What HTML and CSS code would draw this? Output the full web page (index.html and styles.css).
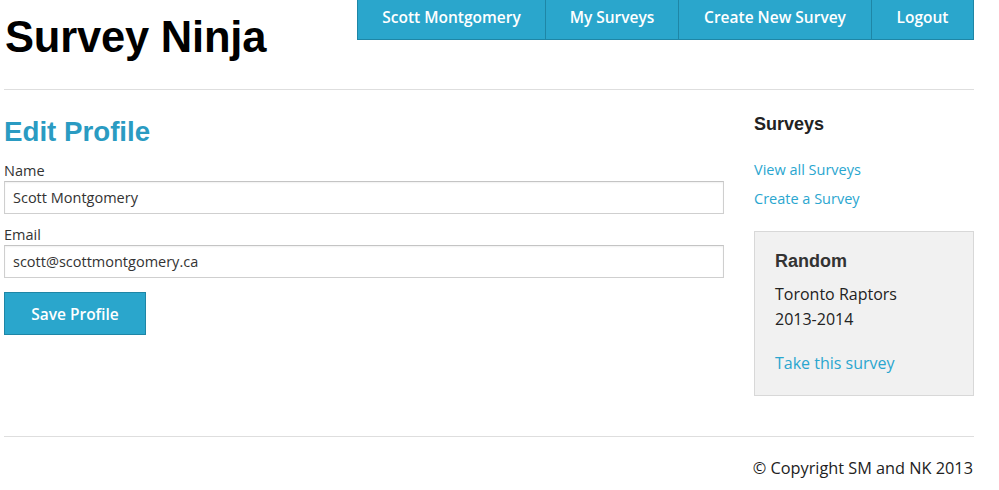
FILE: index.html
```html
<!DOCTYPE html>
<html>
<head>
<meta charset="utf-8">
<title>Survey Ninja</title>
<link rel="stylesheet" href="styles.css">
</head>
<body>
<div class="page">
  <header class="header">
    <h1 class="logo">Survey Ninja</h1>
    <nav class="nav">
      <a class="nav-item nav-user" href="#">Scott Montgomery</a>
      <a class="nav-item nav-my" href="#">My Surveys</a>
      <a class="nav-item nav-create" href="#">Create New Survey</a>
      <a class="nav-item nav-logout" href="#">Logout</a>
    </nav>
  </header>
  <hr class="rule">
  <div class="content">
    <main class="main">
      <h2 class="page-title">Edit Profile</h2>
      <form class="form">
        <label class="label" for="name">Name</label>
        <input class="input" id="name" type="text" value="Scott Montgomery">
        <label class="label label-email" for="email">Email</label>
        <input class="input" id="email" type="text" value="scott@scottmontgomery.ca">
        <button class="btn" type="button">Save Profile</button>
      </form>
    </main>
    <aside class="sidebar">
      <h3 class="side-title">Surveys</h3>
      <ul class="side-links">
        <li><a href="#">View all Surveys</a></li>
        <li><a href="#">Create a Survey</a></li>
      </ul>
      <div class="random">
        <h3 class="random-title">Random</h3>
        <p class="random-name">Toronto Raptors<br>2013-2014</p>
        <a class="random-link" href="#">Take this survey</a>
      </div>
    </aside>
  </div>
  <hr class="rule rule-footer">
  <footer class="footer">© Copyright SM and NK 2013</footer>
</div>
</body>
</html>
```

FILE: styles.css
```css
* { box-sizing: border-box; }
html, body { margin: 0; padding: 0; background: #fff; }
body {
  font-family: "Open Sans", "Noto Sans", sans-serif;
  color: #333;
  font-size: 15px;
}
a { text-decoration: none; color: #2aa6cf; }

.page {
  width: 970px;
  margin-left: 4px;
}

.header {
  display: flex;
  justify-content: space-between;
  align-items: flex-start;
  height: 89px;
}
.logo {
  margin: 11px 0 0 1px;
  font-family: "Liberation Sans", Arial, sans-serif;
  font-weight: bold;
  font-size: 43.5px;
  line-height: 52px;
  color: #000;
  letter-spacing: -0.2px;
}
.nav {
  display: flex;
  height: 40px;
  background: #2aa6cc;
  border: 1px solid #1e86a6;
  border-top: none;
}
.nav-item {
  display: flex;
  align-items: flex-start;
  justify-content: center;
  padding-top: 6px;
  color: #fff;
  font-size: 15.5px;
  font-weight: 600;
  line-height: 22px;
  height: 39px;
  border-left: 1px solid #1e86a6;
}
.nav-item:first-child { border-left: none; }
.nav-user { width: 187px; }
.nav-my { width: 133px; }
.nav-create { width: 193px; }
.nav-logout { width: 102px; }

.rule {
  border: none;
  border-top: 1px solid #dedede;
  margin: 0;
  height: 0;
}

.content {
  display: flex;
  gap: 30px;
  height: 346px;
}
.main { width: 720px; }
.page-title {
  margin: 26px 0 0 0;
  font-family: "Liberation Sans", Arial, sans-serif;
  font-weight: bold;
  font-size: 27.7px;
  line-height: 32px;
  color: #2a9bc2;
}
.form { display: flex; flex-direction: column; align-items: flex-start; }
.label {
  display: block;
  margin-top: 13px;
  font-size: 14.5px;
  line-height: 20px;
  color: #333;
}
.label-email { margin-top: 11px; }
.input {
  display: block;
  width: 720px;
  height: 33px;
  margin-top: 0;
  border: 1px solid #cfcfcf;
  border-top-color: #c4c4c4;
  box-shadow: inset 0 1px 2px rgba(0,0,0,0.06);
  padding: 0 8px;
  font-family: "Open Sans", "Noto Sans", sans-serif;
  font-size: 14.5px;
  color: #333;
  background: #fff;
}
.btn {
  margin-top: 14px;
  width: 142px;
  height: 43px;
  background: #2aa6cc;
  border: 1px solid #1e86a6;
  color: #fff;
  font-family: "Open Sans", "Noto Sans", sans-serif;
  font-size: 15.5px;
  font-weight: 600;
  padding: 0;
}

.sidebar { width: 220px; }
.side-title {
  margin: 23px 0 0 0;
  font-family: "Liberation Sans", Arial, sans-serif;
  font-weight: bold;
  font-size: 18px;
  line-height: 22px;
  color: #222;
}
.side-links {
  list-style: none;
  margin: 20px 0 0 0;
  padding: 0;
}
.side-links li {
  font-size: 14.5px;
  line-height: 29px;
}
.random {
  margin-top: 18px;
  height: 165px;
  background: #f1f1f1;
  border: 1px solid #d8d8d8;
  padding: 18px 20px 0 20px;
}
.random-title {
  margin: 0;
  font-family: "Liberation Sans", Arial, sans-serif;
  font-weight: bold;
  font-size: 18px;
  line-height: 22px;
  color: #333;
}
.random-name {
  margin: 10px 0 0 0;
  font-size: 16px;
  line-height: 25px;
  color: #222;
}
.random-link {
  display: block;
  margin-top: 20px;
  font-size: 16px;
  line-height: 22px;
}

.rule-footer { margin-top: 0; }
.footer {
  text-align: right;
  padding-top: 20px;
  padding-right: 1px;
  font-size: 16.3px;
  line-height: 22px;
  color: #222;
}
```
